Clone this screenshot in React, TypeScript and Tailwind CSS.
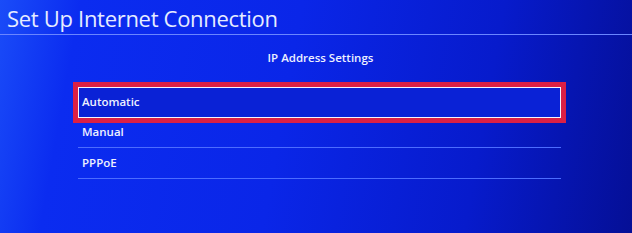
export default function App() {
  return (
    <div className="relative h-[233px] w-[632px] overflow-hidden bg-[linear-gradient(100deg,#1a4cf8_0%,#0b2cf0_12%,#0a26e8_45%,#071bcc_75%,#050f96_100%)] font-['Open_Sans',sans-serif] text-[#eef1ff]">
      <header className="flex h-[35px] items-end border-b border-[#6a86ff] pb-[5px] pl-[7px]">
        <h1 className="text-[22px] leading-none tracking-[-0.3px] text-[#e6ecff]">Set Up Internet Connection</h1>
      </header>
      <p className="mt-[17px] pl-[9px] text-center text-[11.5px] font-semibold leading-none">IP Address Settings</p>
      <div className="ml-[78px] mt-[23px] w-[483px]">
        <div className="flex h-[31px] items-center border-[1.5px] border-[#f4f4ff] bg-[#0a22d6] pl-[3px] text-[11.5px] font-semibold outline-[5px] outline-[#dc2045]">
          Automatic
        </div>
        <div className="flex h-[30px] items-center border-b border-[#4c6cff] pl-[4px] text-[11.5px] font-semibold">
          Manual
        </div>
        <div className="flex h-[31px] items-center border-b border-[#4c6cff] pl-[4px] text-[11.5px] font-semibold">
          PPPoE
        </div>
      </div>
    </div>
  );
}
